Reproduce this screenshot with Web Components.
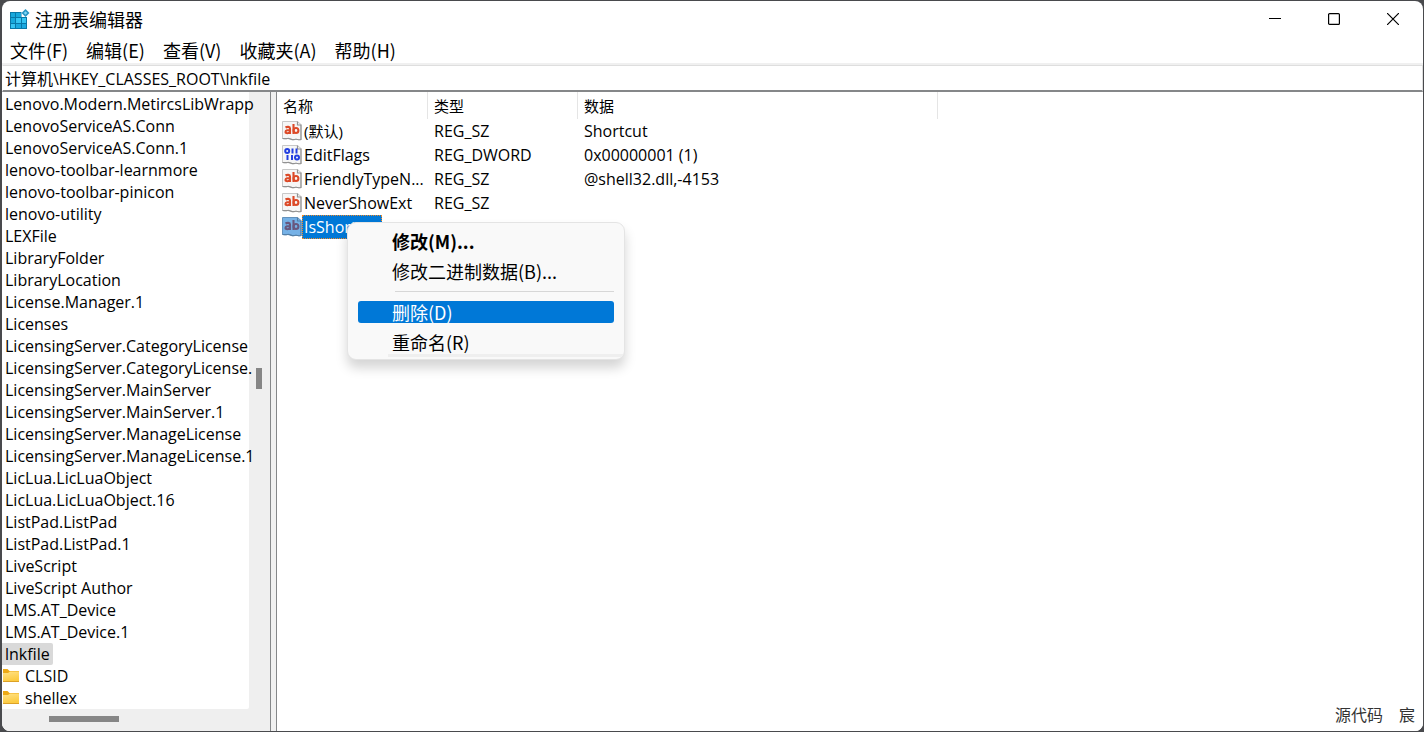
<!DOCTYPE html>
<html lang="zh-CN">
<head>
<meta charset="utf-8">
<title>注册表编辑器</title>
<style>
html, body { height: 100%; margin: 0; }
body {
  background: #494a4d; overflow: hidden; color: #000;
  font: 16px/22px "Open Sans", "Noto Sans CJK SC", sans-serif;
}
</style>
</head>
<body>
<registry-window></registry-window>
<script>
class Base extends HTMLElement {
  constructor() {
    super();
    this.attachShadow({ mode: 'open' });
  }
  connectedCallback() {
    this.shadowRoot.innerHTML = this.view();
  }
}

customElements.define('title-bar', class extends Base {
  view() {
    return `<style>
      :host { display: flex; align-items: center; height: 36px; padding: 0 1px 0 7px; box-sizing: border-box; }
      h1 { flex: 1; margin: 0 0 0 4px; font: 18px/24px "Noto Sans CJK SC", sans-serif; }
      svg { display: block; }
      button { display: grid; place-items: center; width: 59px; height: 36px; border: 0; padding: 0; background: none; color: #000; }
    </style>
    <svg width="22" height="22" viewBox="0 0 22 22" aria-hidden="true">
      <rect x="1" y="4" width="17" height="17" fill="#0878a8"/>
      <path d="M2 5h4v4H2zM7 5h5v4H7zM2 10h4v5H2z" fill="#18a8dc"/>
      <path d="M7 10h5v5H7zM13 10h4v5h-4zM2 16h4v4H2z" fill="#35c4f2"/>
      <path d="M7 16h5v4H7zM13 16h4v4h-4z" fill="#1ba9e0"/>
      <path d="M12.500 4h7v5h-7z" fill="#fff"/>
      <path d="M16.500 1l4 4-4 4-4-4z" fill="#2795c4"/>
      <path d="M16.500 3.200l1.800 1.800-1.800 1.800-1.800-1.800z" fill="#7fd6f5"/>
    </svg>
    <h1>注册表编辑器</h1>
    <button aria-label="最小化"><svg width="12" height="12"><path d="M0 5.500h12" stroke="#000"/></svg></button>
    <button aria-label="最大化"><svg width="12" height="12"><rect x=".6" y=".6" width="10.800" height="10.800" rx="1" fill="none" stroke="#000" stroke-width="1.200"/></svg></button>
    <button aria-label="关闭"><svg width="12" height="12"><path d="M0 0l12 12M12 0L0 12" stroke="#000" stroke-width="1.200"/></svg></button>`;
  }
});

customElements.define('menu-bar', class extends Base {
  view() {
    const items = ['文件(F)', '编辑(E)', '查看(V)', '收藏夹(A)', '帮助(H)'];
    return `<style>
      :host { display: flex; gap: 18px; height: 26px; padding: 0 8px; border-bottom: 2px solid #f0f0f0; }
      button { border: 0; padding: 0; background: none; color: inherit; font: 18px/26px "Noto Sans CJK SC", sans-serif; }
    </style>${items.map(t => `<button>${t}</button>`).join('')}`;
  }
});

customElements.define('address-bar', class extends Base {
  view() {
    return `<style>
      :host { display: block; height: 27px; box-sizing: border-box; border: 1px solid #dedede; border-bottom: 2px solid #858789; border-left-color: #fff; }
      input { display: block; width: 100%; height: 24px; box-sizing: border-box; border: 0; padding: 0 2px; outline: 0; background: #fff; color: #000; font: inherit; }
    </style><input aria-label="地址" value="计算机\\HKEY_CLASSES_ROOT\\lnkfile">`;
  }
});

customElements.define('tree-item', class extends Base {
  view() {
    const folder = this.hasAttribute('folder') ? `<svg width="17" height="16" viewBox="0 0 17 16" aria-hidden="true">
      <defs><linearGradient id="f" x2="0.300" y2="1"><stop stop-color="#ffe287"/><stop offset="1" stop-color="#fccb42"/></linearGradient></defs>
      <path d="M1 1h4.500l2 2H17v11H1z" fill="#eda914"/>
      <path d="M1 5h5l2-1.500h9V13H1z" fill="url(#f)"/>
      <path d="M1 13h16v1H1z" fill="#dca126"/></svg>` : '';
    return `<style>
      :host { display: flex; align-items: center; height: 22px; width: max-content; padding: 0 3px; white-space: nowrap; }
      :host([folder]) { padding-left: 0; gap: 6px; }
      :host([selected]) { background: #d9d9d9; border-radius: 0 2px 2px 0; }
      svg { display: block; }
    </style>${folder}<span><slot></slot></span>`;
  }
});

customElements.define('key-tree', class extends Base {
  view() {
    const keys = ['Lenovo.Modern.MetircsLibWrapp', 'LenovoServiceAS.Conn', 'LenovoServiceAS.Conn.1',
      'lenovo-toolbar-learnmore', 'lenovo-toolbar-pinicon', 'lenovo-utility', 'LEXFile', 'LibraryFolder',
      'LibraryLocation', 'License.Manager.1', 'Licenses', 'LicensingServer.CategoryLicense',
      'LicensingServer.CategoryLicense.', 'LicensingServer.MainServer', 'LicensingServer.MainServer.1',
      'LicensingServer.ManageLicense', 'LicensingServer.ManageLicense.1', 'LicLua.LicLuaObject',
      'LicLua.LicLuaObject.16', 'ListPad.ListPad', 'ListPad.ListPad.1', 'LiveScript', 'LiveScript Author',
      'LMS.AT_Device', 'LMS.AT_Device.1'];
    return `<style>
      :host { display: grid; grid-template: minmax(0, 1fr) 22px / minmax(0, 1fr) 21px; width: 268px; background: #efefef; border-right: 1px solid #858789; }
      .view { background: #fff; padding-top: 1px; border-radius: 0 0 2px 0; }
      .v, .h { display: flex; }
      .v { flex-direction: column; padding: 276px 0 0 7px; }
      .h { padding: 7px 0 0 47px; }
      .v i { width: 6px; height: 21px; background: #868686; }
      .h i { width: 70px; height: 6px; background: #868686; }
    </style>
    <div class="view" role="tree">
      ${keys.map(k => `<tree-item role="treeitem">${k}</tree-item>`).join('')}
      <tree-item role="treeitem" selected>lnkfile</tree-item>
      <tree-item role="treeitem" folder>CLSID</tree-item>
      <tree-item role="treeitem" folder>shellex</tree-item>
    </div>
    <div class="v"><i></i></div>
    <div class="h"><i></i></div>`;
  }
});

customElements.define('value-icon', class extends Base {
  view() {
    const sel = this.hasAttribute('selected');
    const glyph = this.getAttribute('kind') === 'binary'
      ? `<g fill="none" stroke="#2440e0" stroke-width="2">
          <ellipse cx="5.200" cy="6" rx="2" ry="1.900"/><ellipse cx="15" cy="12.500" rx="2" ry="1.900"/>
          <path d="M10.500 3.500v5M14.500 3.500v5M5.500 10v5M10 10v5"/></g>`
      : `<g fill="none" stroke="${sel ? '#68577e' : '#dc4a28'}" stroke-width="2.100">
          <path d="M3.500 6.500c1.500-.9 4.500-1 4.500 1V13M8 9c-2 0-4.500.1-4.500 1.900 0 2 3.500 1.600 4.500-.1M11.500 3v10"/>
          <ellipse cx="14" cy="9.500" rx="2.400" ry="2.500"/></g>`;
    return `<style>:host { display: block; width: 20px; height: 20px; } svg { display: block; }</style>
    <svg width="20" height="20" viewBox="0 0 20 20" aria-hidden="true">
      <path d="M.5.500h15l3.500 3v15c-3 1-4-1-6.500 0s-4.500-1.500-7-1-3 0-5 0z" fill="${sel ? '#75b1e6' : '#f6f6f6'}" stroke="${sel ? '#6392bd' : '#c8c8c8'}"/>
      <path d="M15.500.500V4H19v14.500c-3 1-4-1-6.500 0s-4.500-1.500-7-1-3 0-5 0" fill="none" stroke="${sel ? '#527fa8' : '#929292'}" stroke-width="1.200"/>
      ${glyph}
    </svg>`;
  }
});

customElements.define('value-list', class extends Base {
  view() {
    const rows = [
      ['text', '(默认)', 'REG_SZ', 'Shortcut'],
      ['binary', 'EditFlags', 'REG_DWORD', '0x00000001 (1)'],
      ['text', 'FriendlyTypeN...', 'REG_SZ', '@shell32.dll,-4153'],
      ['text', 'NeverShowExt', 'REG_SZ', ''],
      ['text', 'IsShortcut', '', '']
    ];
    return `<style>
      :host { display: block; position: relative; flex: 1; min-width: 0; background: #fff; border-left: 1px solid #858789; }
      table { border-collapse: separate; border-spacing: 0; table-layout: fixed; width: 661px; }
      th { height: 27px; padding: 1px 0 0 6px; box-sizing: border-box; border-right: 1px solid #e5e5e5; text-align: left; font-weight: 400; font-size: 15px; line-height: 22px; }
      td { height: 24px; padding: 0 0 0 6px; line-height: 24px; white-space: nowrap; }
      .name { display: flex; align-items: center; height: 24px; margin-left: -1px; }
      .name span { padding: 0 2px; }
      .sel span { background: #0078d7; color: #fff; outline: 1px dotted #f08a28; outline-offset: -1px; }
      .c1 { width: 151px; } .c2 { width: 150px; } .c3 { width: 360px; }
      .cjk { font-size: 15px; }
      context-menu { position: absolute; left: 70px; top: 130px; }
    </style>
    <table>
      <colgroup><col class="c1"><col class="c2"><col class="c3"></colgroup>
      <thead><tr><th>名称</th><th>类型</th><th>数据</th></tr></thead>
      <tbody>${rows.map(([kind, name, type, data], i) => {
        const s = i === 4;
        return `<tr><td><div class="name${s ? ' sel' : ''}${i === 0 ? ' cjk' : ''}"><value-icon kind="${kind}"${s ? ' selected' : ''}></value-icon><span>${name}</span></div></td><td>${type}</td><td>${data}</td></tr>`;
      }).join('')}</tbody>
    </table>
    <context-menu></context-menu>`;
  }
});

customElements.define('context-menu', class extends Base {
  view() {
    return `<style>
      :host { display: flex; flex-direction: column; gap: 8px; width: 278px; padding: 7px 10px 2px; box-sizing: border-box; background: #f9f9f9; border: 1px solid #e4e4e4; border-radius: 9px; box-shadow: 0 8px 12px rgba(0,0,0,.17); overflow: hidden; }
      button { height: 22px; border: 0; border-radius: 3px; padding: 0 0 0 34px; background: none; color: #000; text-align: left; white-space: nowrap; font: 18px/22px "Noto Sans CJK SC", sans-serif; }
      .default { font-weight: 700; }
      .hot { background: #0078d7; color: #fff; }
      hr { width: 219px; height: 1px; margin: 1px 0 1px auto; border: 0; background: #d7d7d7; }
      .edge { height: 3px; margin: -7px -10px 0 30px; background: #efefef; }
    </style>
    <button class="default">修改(M)...</button>
    <button>修改二进制数据(B)...</button>
    <hr>
    <button class="hot">删除(D)</button>
    <button>重命名(R)</button>
    <div class="edge"></div>`;
  }
});

customElements.define('registry-window', class extends Base {
  view() {
    return `<style>
      :host { display: block; height: 100vh; padding: 1px 1px 1px 2px; box-sizing: border-box; }
      .window { position: relative; display: flex; flex-direction: column; height: 100%; background: #fff; border-radius: 8px; overflow: hidden; }
      main { display: flex; gap: 5px; flex: 1; min-height: 0; background: #f0f0f0; }
      .mark { position: absolute; right: 8px; bottom: 6px; display: flex; gap: 16px; margin: 0; font: 16px/22px "Noto Sans CJK SC", sans-serif; color: #333; }
    </style>
    <div class="window">
      <title-bar></title-bar>
      <menu-bar></menu-bar>
      <address-bar></address-bar>
      <main><key-tree></key-tree><value-list></value-list></main>
      <p class="mark"><span>源代码</span><span>宸</span></p>
    </div>`;
  }
});
</script>
</body>
</html>
